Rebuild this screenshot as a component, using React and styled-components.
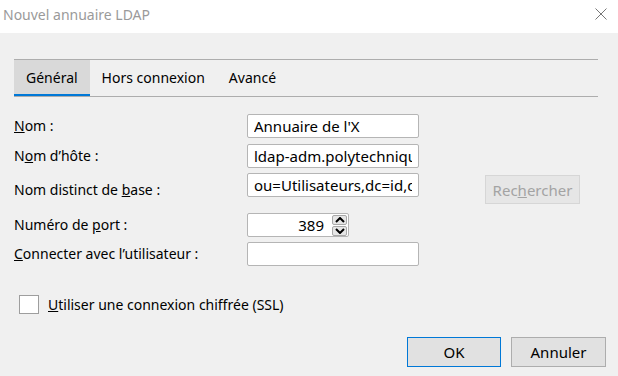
import React from 'react';
import styled, { createGlobalStyle } from 'styled-components';

const GlobalStyle = createGlobalStyle`
  body {
    margin: 0;
    background: #f0f0f0;
    font-family: 'Segoe UI', 'Noto Sans', 'Open Sans', sans-serif;
    font-size: 14px;
    color: #000;
  }
`;

const App = () => {
  return (
    <Window>
      <GlobalStyle />
      <TitleBar>
        <Title>Nouvel annuaire LDAP</Title>
        <CloseIcon width="12" height="12" viewBox="0 0 12 12">
          <path d="M0.5 0.5 L11.5 11.5 M11.5 0.5 L0.5 11.5" stroke="#777" strokeWidth="1" fill="none" />
        </CloseIcon>
      </TitleBar>
      <Body>
        <TabBar>
          <Tab $active>Général</Tab>
          <Tab>Hors connexion</Tab>
          <Tab>Avancé</Tab>
        </TabBar>

        <Form>
          <Label>
            <u>N</u>om :
          </Label>
          <TextBox value="Annuaire de l'X" readOnly />
          <span />
          <span />

          <Label>
            N<u>o</u>m d’hôte :
          </Label>
          <TextBox value="ldap-adm.polytechnique.fr" readOnly />
          <span />
          <span />

          <Label $center>
            Nom distinct de <u>b</u>ase :
          </Label>
          <TextBox value="ou=Utilisateurs,dc=id,dc=polytechnique,dc=edu" readOnly />
          <span />
          <SearchButton disabled>
            Rec<u>h</u>ercher
          </SearchButton>

          <Label>
            Numéro de <u>p</u>ort :
          </Label>
          <PortWrap>
            <PortBox value="389" readOnly />
            <Spinner>
              <SpinButton>
                <svg width="10" height="6" viewBox="0 0 10 6">
                  <path d="M1 5 L5 1 L9 5" stroke="#000" strokeWidth="2" fill="none" />
                </svg>
              </SpinButton>
              <SpinButton>
                <svg width="10" height="6" viewBox="0 0 10 6">
                  <path d="M1 1 L5 5 L9 1" stroke="#000" strokeWidth="2" fill="none" />
                </svg>
              </SpinButton>
            </Spinner>
          </PortWrap>
          <span />
          <span />

          <Label>
            <u>C</u>onnecter avec l’utilisateur :
          </Label>
          <TextBox value="" readOnly />
          <span />
          <span />
        </Form>

        <CheckRow>
          <CheckBox />
          <span>
            <u>U</u>tiliser une connexion chiffrée (SSL)
          </span>
        </CheckRow>

        <Footer>
          <DialogButton $default>OK</DialogButton>
          <DialogButton>Annuler</DialogButton>
        </Footer>
      </Body>
    </Window>
  );
};

const Window = styled.div`
  width: 618px;
  height: 376px;
  display: flex;
  flex-direction: column;
  background: #f0f0f0;
  overflow: hidden;
`;

const TitleBar = styled.div`
  height: 33px;
  background: #fff;
  display: flex;
  align-items: center;
  justify-content: space-between;
  padding: 0 11px 0 3px;
  box-sizing: border-box;
`;

const Title = styled.div`
  color: #9a9a9a;
  font-size: 14px;
  margin-top: -4px;
`;

const CloseIcon = styled.svg`
  margin-top: -6px;
`;

const Body = styled.div`
  flex: 1;
  padding: 26px 12px 0 14px;
  display: flex;
  flex-direction: column;
`;

const TabBar = styled.div`
  width: 584px;
  height: 38px;
  border-top: 1px solid #adadad;
  border-bottom: 1px solid #adadad;
  box-sizing: border-box;
  display: flex;
`;

const Tab = styled.div`
  height: 100%;
  box-sizing: border-box;
  padding: 1px 12px 0;
  display: flex;
  align-items: center;
  background: ${(p) => (p.$active ? '#d9d9d9' : 'transparent')};
  border-bottom: 2px solid ${(p) => (p.$active ? '#0078d7' : 'transparent')};
`;

const Form = styled.div`
  margin-top: 17px;
  display: grid;
  grid-template-columns: 233px 172px 66px 95px;
  grid-template-rows: 30px 29px 40px 29px 24px;
  align-items: start;
`;

const Label = styled.div`
  height: ${(p) => (p.$center ? '31px' : '24px')};
  line-height: ${(p) => (p.$center ? '33px' : '24px')};
  white-space: nowrap;
`;

const TextBox = styled.input`
  width: 172px;
  height: 24px;
  box-sizing: border-box;
  border: 1px solid #b5b5b5;
  border-radius: 2px;
  background: #fff;
  padding: 0 6px;
  font: inherit;
  font-size: 15px;
  color: #000;
  outline: none;
`;

const PortWrap = styled.div`
  width: 102px;
  height: 24px;
  box-sizing: border-box;
  border: 1px solid #b5b5b5;
  border-radius: 2px;
  background: #fff;
  display: flex;
  align-items: center;
  padding-right: 1px;
`;

const PortBox = styled.input`
  flex: 1;
  min-width: 0;
  border: none;
  background: transparent;
  text-align: right;
  font: inherit;
  font-size: 15px;
  padding: 0 8px 0 4px;
  outline: none;
`;

const Spinner = styled.div`
  display: flex;
  flex-direction: column;
  gap: 1px;
`;

const SpinButton = styled.div`
  width: 15px;
  height: 10px;
  box-sizing: border-box;
  border: 1px solid #a8a8a8;
  border-radius: 2px;
  background: #e6e6e6;
  display: flex;
  align-items: center;
  justify-content: center;
`;

const SearchButton = styled.button`
  margin-top: 2px;
  width: 95px;
  height: 29px;
  box-sizing: border-box;
  border: 1px solid #d6d6d6;
  background: #e6e6e6;
  color: #a3a3a3;
  font: inherit;
  font-size: 15px;
  padding: 0;
`;

const CheckRow = styled.div`
  margin-top: 29px;
  margin-left: 5px;
  display: flex;
  align-items: center;
  gap: 9px;
`;

const CheckBox = styled.div`
  width: 20px;
  height: 19px;
  box-sizing: border-box;
  border: 1px solid #9e9e9e;
  background: #fff;
`;

const Footer = styled.div`
  margin-top: 23px;
  display: flex;
  justify-content: flex-end;
  gap: 10px;
`;

const DialogButton = styled.button`
  width: ${(p) => (p.$default ? '94px' : '95px')};
  height: 30px;
  box-sizing: border-box;
  border: 1px solid ${(p) => (p.$default ? '#0078d7' : '#adadad')};
  background: #e1e1e1;
  font: inherit;
  font-size: 15px;
  color: #000;
  padding: 0;
`;

export default App;
